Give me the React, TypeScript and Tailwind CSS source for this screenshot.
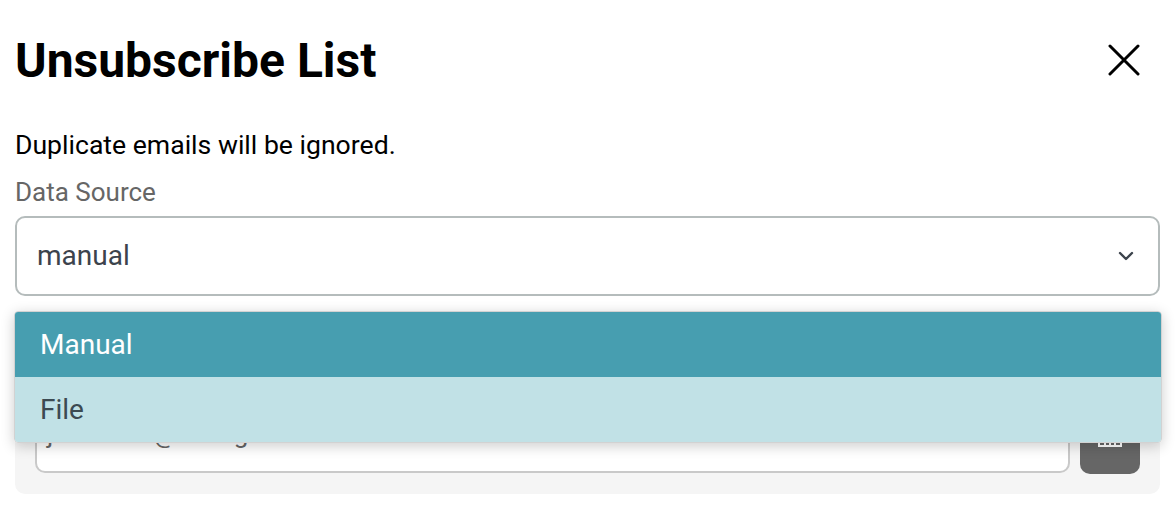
import { ChevronDown } from "lucide-react";

const App = () => (
  <div className="h-[522px] w-[1176px] overflow-hidden bg-white pl-[15px] pr-[16px] font-['Roboto',sans-serif]">
    <div className="flex h-[120px] items-center justify-between">
      <h1 className="pt-[2px] text-[48px] leading-none font-bold text-black">Unsubscribe List</h1>
      <button className="mr-[20px] text-black">
        <svg width="32" height="32" viewBox="0 0 32 32" fill="none" stroke="currentColor" strokeWidth="3" strokeLinecap="round">
          <path d="M2 2 L30 30 M30 2 L2 30" />
        </svg>
      </button>
    </div>
    <p className="mt-[10px] text-[26.6px] leading-[30px] text-black">Duplicate emails will be ignored.</p>
    <label className="mt-[14px] block text-[26px] leading-[36px] text-[#666666]">Data Source</label>
    <div className="relative mt-[6px]">
      <div className="flex h-[80px] items-center justify-between rounded-[10px] border-2 border-[#b5bcbc] bg-white pl-[20px] pr-[20px] text-[28px] text-[#3c434c]">
        <span>manual</span>
        <ChevronDown size={24} strokeWidth={2.4} className="text-[#3c434c]" />
      </div>
      <div className="mt-[15px] flex h-[183px] items-end gap-[10px] rounded-[10px] bg-[#f5f5f5] px-[20px] pb-[20px]">
        <div className="mb-[1px] flex h-[60px] flex-1 items-start rounded-[10px] border-2 border-[#c9c9c9] bg-white px-[10px] pt-[4px] text-[26px] text-[#666666]">
          <span className="leading-[30px]">johndoes@sonngle.com</span>
        </div>
        <button className="flex h-[60px] w-[60px] items-start justify-center rounded-[10px] bg-[#666666] pt-[11px]">
          <svg width="24" height="22" viewBox="0 0 24 22" fill="none" stroke="white" strokeWidth="2">
            <path d="M1 1 H23 V21 H1 Z M7 10 V21 M12 10 V21 M17 10 V21" />
          </svg>
        </button>
      </div>
      <div className="absolute top-[95px] -left-[1px] -right-[2px] overflow-hidden rounded-[4px] border border-[#d2d2d2] text-[28px] shadow-[0_3px_14px_rgba(0,0,0,0.2)]">
        <div className="flex h-[65px] items-center bg-[#479eb0] pl-[25px] text-white">Manual</div>
        <div className="flex h-[65px] items-center bg-[#c1e1e6] pl-[25px] text-[#3c4a52]">File</div>
      </div>
    </div>
  </div>
);

export default App;
